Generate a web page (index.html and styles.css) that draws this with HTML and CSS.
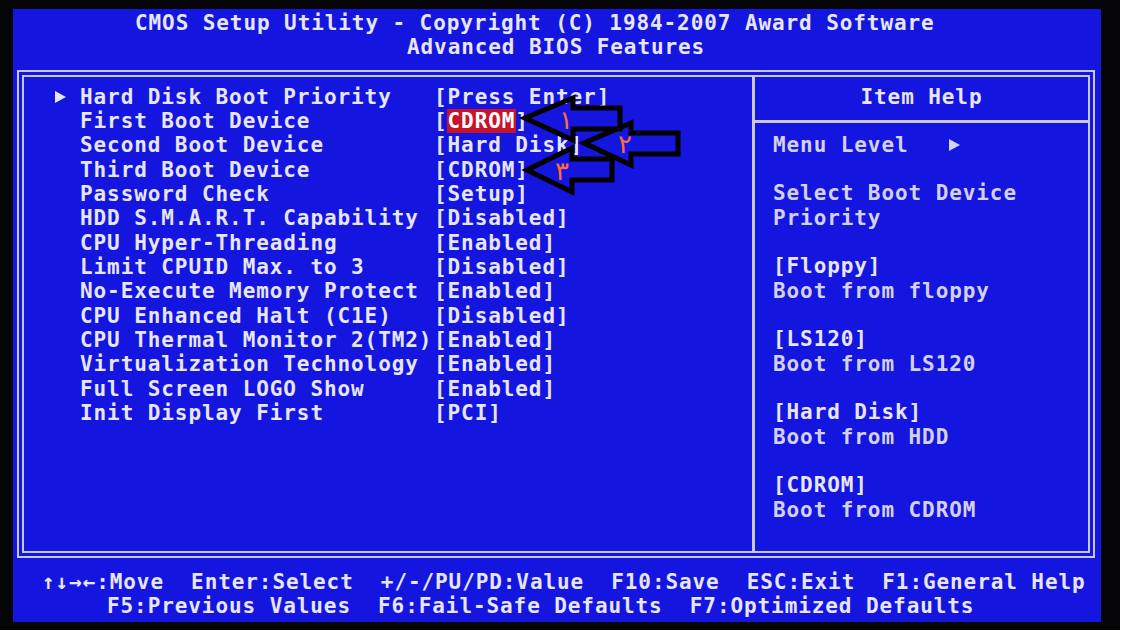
FILE: index.html
```html
<!DOCTYPE html>
<html lang="en">
<head>
<meta charset="utf-8">
<title>CMOS Setup Utility - Advanced BIOS Features</title>
<link rel="stylesheet" href="styles.css">
</head>
<body>
<div class="monitor">
  <div class="screen">
    <header class="title">
      <div class="t1">CMOS Setup Utility - Copyright (C) 1984-2007 Award Software</div>
      <div class="t2">Advanced BIOS Features</div>
    </header>
    <div class="frame">
      <div class="items">
        <div class="row"><span class="mark"><svg class="tri" viewBox="0 0 11 12"><polygon points="0,0 11,6 0,12"/></svg></span><span class="name">Hard Disk Boot Priority</span><span class="val">[Press Enter]</span></div>
        <div class="row"><span class="mark"></span><span class="name">First Boot Device</span><span class="val">[<span class="sel">CDROM</span>]</span></div>
        <div class="row"><span class="mark"></span><span class="name">Second Boot Device</span><span class="val">[Hard Disk]</span></div>
        <div class="row"><span class="mark"></span><span class="name">Third Boot Device</span><span class="val">[CDROM]</span></div>
        <div class="row"><span class="mark"></span><span class="name">Password Check</span><span class="val">[Setup]</span></div>
        <div class="row"><span class="mark"></span><span class="name">HDD S.M.A.R.T. Capability</span><span class="val">[Disabled]</span></div>
        <div class="row"><span class="mark"></span><span class="name">CPU Hyper-Threading</span><span class="val">[Enabled]</span></div>
        <div class="row"><span class="mark"></span><span class="name">Limit CPUID Max. to 3</span><span class="val">[Disabled]</span></div>
        <div class="row"><span class="mark"></span><span class="name">No-Execute Memory Protect</span><span class="val">[Enabled]</span></div>
        <div class="row"><span class="mark"></span><span class="name">CPU Enhanced Halt (C1E)</span><span class="val">[Disabled]</span></div>
        <div class="row"><span class="mark"></span><span class="name">CPU Thermal Monitor 2(TM2)</span><span class="val">[Enabled]</span></div>
        <div class="row"><span class="mark"></span><span class="name">Virtualization Technology</span><span class="val">[Enabled]</span></div>
        <div class="row"><span class="mark"></span><span class="name">Full Screen LOGO Show</span><span class="val">[Enabled]</span></div>
        <div class="row"><span class="mark"></span><span class="name">Init Display First</span><span class="val">[PCI]</span></div>
      </div>
      <aside class="help">
        <div class="help-head">Item Help</div>
        <div class="help-body">
          <div class="hl dim"><span class="ht">Menu Level   </span><svg class="tri" viewBox="0 0 11 12"><polygon points="0,0 11,6 0,12"/></svg></div>
          <div class="hl"></div>
          <div class="hl dim"><span class="ht">Select Boot Device</span></div>
          <div class="hl dim"><span class="ht">Priority</span></div>
          <div class="hl"></div>
          <div class="hl"><span class="ht">[Floppy]</span></div>
          <div class="hl dim"><span class="ht">Boot from floppy</span></div>
          <div class="hl"></div>
          <div class="hl"><span class="ht">[LS120]</span></div>
          <div class="hl dim"><span class="ht">Boot from LS120</span></div>
          <div class="hl"></div>
          <div class="hl"><span class="ht">[Hard Disk]</span></div>
          <div class="hl dim"><span class="ht">Boot from HDD</span></div>
          <div class="hl"></div>
          <div class="hl"><span class="ht">[CDROM]</span></div>
          <div class="hl dim"><span class="ht">Boot from CDROM</span></div>
        </div>
      </aside>
    </div>
    <footer class="keys">
      <div class="k1">↑↓→←:Move  Enter:Select  +/-/PU/PD:Value  F10:Save  ESC:Exit  F1:General Help</div>
      <div class="k2">F5:Previous Values  F6:Fail-Safe Defaults  F7:Optimized Defaults</div>
    </footer>
  </div>
  <svg class="notes" viewBox="0 0 1126 634" width="1126" height="634">
    <polygon class="arrow" points="525,118 573,98 573,108 620,108 620,129 573,129 573,140"/>
    <polygon class="arrow" points="584,143 631,123 631,133 678,133 678,154 631,154 631,165"/>
    <polygon class="arrow" points="527,170 572,148 572,159 612,159 612,180 572,180 572,192"/>
    <text class="num" x="559" y="129">١</text>
    <text class="num" x="618" y="153">٢</text>
    <text class="num" x="555" y="180">٣</text>
  </svg>
</div>
</body>
</html>
```

FILE: styles.css
```css
* {
  box-sizing: border-box;
}

html,
body {
  margin: 0;
  background: #ffffff;
}

body {
  width: 1126px;
  height: 634px;
  overflow: hidden;
}

.monitor {
  position: relative;
  width: 1120px;
  height: 630px;
  background: #050508;
  padding: 9px 19px 8px 13px;
}

.screen {
  width: 1088px;
  height: 613px;
  background: #1515e0;
  display: flex;
  flex-direction: column;
  font-family: "DejaVu Sans Mono", "Liberation Mono", monospace;
  font-weight: bold;
  font-size: 21px;
  letter-spacing: 0.91px;
  line-height: 24.33px;
  color: #e6e6f8;
}

.t1,
.t2,
.name,
.val,
.ht,
.help-head,
.k1,
.k2 {
  white-space: pre;
}

.title {
  padding-top: 2px;
  height: 61px;
  flex: none;
}

.t1 {
  padding-left: 122px;
}

.t2 {
  padding-left: 394px;
}

.frame {
  flex: none;
  margin-left: 4px;
  width: 1078px;
  height: 488px;
  border: 7px double #c6c6f0;
  display: flex;
}

.items {
  width: 728px;
  flex: none;
  padding: 7.8px 0 0 29px;
}

.row {
  display: flex;
  height: 24.33px;
}

.mark {
  width: 27px;
  flex: none;
  display: flex;
  align-items: center;
  padding-left: 2px;
}

.tri {
  width: 11px;
  height: 12px;
  fill: #e6e6f8;
  flex: none;
}

.name {
  width: 354px;
  flex: none;
}

.sel {
  background: #c8142a;
  color: #ffffff;
  padding: 0 1px;
  margin: 0 -1px;
}

.help {
  flex: 1;
  border-left: 3px solid #c6c6f0;
  display: flex;
  flex-direction: column;
}

.help-head {
  height: 46px;
  padding-top: 7.8px;
  text-align: center;
  border-bottom: 3px solid #c6c6f0;
}

.help-body {
  padding: 9.8px 0 0 18px;
}

.hl {
  height: 24.33px;
  display: flex;
  align-items: center;
}

.dim {
  color: #d2d2f0;
}

.dim .tri {
  fill: #d2d2f0;
}

.keys {
  margin-top: 11.8px;
}

.k1 {
  padding-left: 29px;
}

.k2 {
  padding-left: 94px;
}

.notes {
  position: absolute;
  left: 0;
  top: 0;
  pointer-events: none;
}

.arrow {
  fill: none;
  stroke: #000000;
  stroke-width: 5;
  stroke-linejoin: miter;
}

.num {
  font-family: "DejaVu Sans", sans-serif;
  font-size: 26px;
  fill: #ff6b3a;
}
```
